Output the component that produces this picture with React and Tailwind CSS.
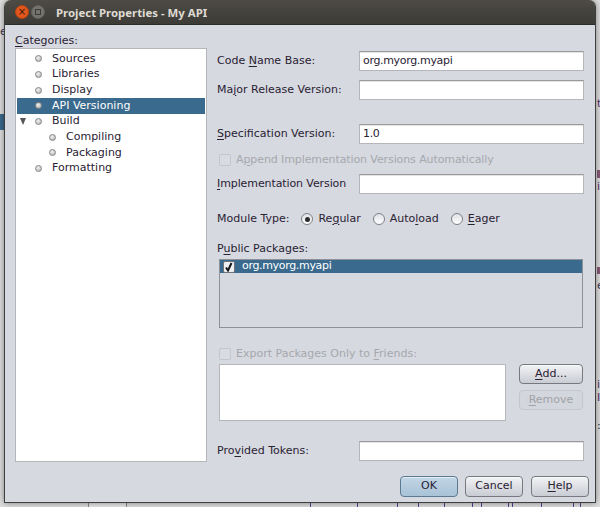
import React from "react";

const treeItems = [
  { label: "Sources" },
  { label: "Libraries" },
  { label: "Display" },
  { label: "API Versioning", selected: true },
  { label: "Build", expander: true },
  { label: "Compiling", child: true },
  { label: "Packaging", child: true },
  { label: "Formatting" },
];

const U = ({ children }) => <span className="underline underline-offset-2">{children}</span>;

const Bullet = () => (
  <span className="block w-[7px] h-[7px] rounded-full border border-[#85878a] bg-[radial-gradient(circle_at_40%_35%,#f4f4f4,#a8a8a8)]" />
);

const TreeRow = ({ label, selected, expander, child }) => (
  <div className={`flex items-center h-[15.7px] ${selected ? "bg-[#3a6a8e] text-white" : "text-[#2a2233]"}`}>
    <span className="w-[18px] flex">
      {expander && <span className="block ml-[3px] w-0 h-0 border-l-[3px] border-r-[3px] border-t-[7px] border-l-transparent border-r-transparent border-t-[#555]" />}
    </span>
    <span className={child ? "ml-[14px] w-[17px]" : "w-[17px]"}>
      <Bullet />
    </span>
    <span>{label}</span>
  </div>
);

const Field = ({ value }) => (
  <div className="w-[225px] h-[20px] bg-white border border-[#b4b6ba] border-t-[#9a9a9a] shadow-[inset_0_1px_0_#e4e4e4] pl-[3px] leading-[18px] tracking-[-0.33px] text-[#2a2233]">
    {value}
  </div>
);

const FormRow = ({ label, value, className }) => (
  <div className={`flex items-center h-[20px] ${className}`}>
    <span className="w-[142px] text-[#2a2233] shrink-0">{label}</span>
    <Field value={value} />
  </div>
);

const Radio = ({ checked }) => (
  <span className="flex items-center justify-center w-[12px] h-[12px] rounded-full border border-[#7e8085] bg-gradient-to-b from-[#dfe1e6] to-[#ffffff]">
    {checked && <span className="block w-[5px] h-[5px] rounded-full bg-[#2c2c2c]" />}
  </span>
);

const DisabledCheck = () => (
  <span className="block ml-[2px] w-[12px] h-[12px] rounded-[2px] border border-[#c4c6cb] bg-[#d8dbe1]" />
);

const Button = ({ children, className }) => (
  <div className={`flex items-center justify-center rounded-[4px] border text-[#2a2233] shadow-[inset_0_1px_0_rgba(255,255,255,0.6)] ${className}`}>{children}</div>
);

const WinButton = ({ children, className }) => (
  <span className={`flex items-center justify-center w-[14px] h-[14px] rounded-full ${className}`}>{children}</span>
);

const bottomTicks = [310, 357, 397, 418, 444, 472, 481, 508, 512, 541, 573, 580];

export default function App() {
  return (
    <div className="relative w-[600px] h-[507px] overflow-hidden bg-[#dedede] font-['DejaVu_Sans',sans-serif] text-[11px]">
      {/* bits of the window behind the dialog */}
      <span className="absolute left-0 top-[24px] text-[#3b3350]">e</span>
      <div className="absolute left-0 top-[114px] w-[5px] h-[16px] bg-[#3a6a8e]" />
      <span className="absolute left-[597px] top-[96px] text-[#5a2f6e]">t</span>
      <div className="absolute left-[597px] top-[170px] w-[3px] h-[8px] bg-[#8a5a78]" />
      <span className="absolute left-[597px] top-[179px] text-[#5a2f6e]">i</span>
      <div className="absolute left-[597px] top-[267px] w-[3px] h-[7px] bg-[#8a5a78]" />
      <span className="absolute left-[597px] top-[278px] text-[#3b3350]">e</span>
      <span className="absolute left-[597px] top-[377px] text-[#5a2f6e]">i</span>
      <span className="absolute left-[597px] top-[390px] text-[#5a2f6e]">I</span>
      <span className="absolute left-[597px] top-[418px] text-[#222]">:</span>
      <div className="absolute left-[88px] top-[502px] w-[39px] h-[5px] bg-[#e8e8e8] border-x border-[#888]" />
      {bottomTicks.map((x) => (
        <div key={x} className="absolute top-[503px] w-[1px] h-[4px] bg-[#5a3f8e]" style={{ left: x }} />
      ))}

      {/* dialog */}
      <div className="relative ml-[4px] w-[592px] h-[503px] flex flex-col bg-[#d6d9e0] border-x border-b border-[#3f3f3f] rounded-t-[7px] shadow-[0_0_6px_rgba(0,0,0,0.45)]">
        <div className="flex items-center h-[25px] shrink-0 rounded-t-[6px] bg-gradient-to-b from-[#4e4b45] to-[#3c3b37] border-b border-[#2c2c2c] pl-[10px]">
          <WinButton className="bg-[#e2571e] border border-[#b5430f]">
            <span className="text-[#3a1a08] text-[10px] leading-none">×</span>
          </WinButton>
          <WinButton className="ml-[2px] bg-[#75736e] border border-[#62605b]">
            <span className="block w-[6px] h-[6px] border border-[#3c3b37]" />
          </WinButton>
          <span className="ml-[11px] mt-[1px] font-bold text-[11.4px] text-[#dfdbd2] font-['Noto_Sans',sans-serif]">Project Properties - My API</span>
        </div>

        <div className="flex flex-1 pl-[10px] pt-[6px]">
          <div className="w-[192px] shrink-0 flex flex-col">
            <div className="h-[17px] leading-[17px] pt-[1px] text-[#2a2233]"><U>C</U>ategories:</div>
            <div className="w-[192px] h-[414px] bg-white border border-[#b4b6ba] pt-[2px] pl-[1px] pr-[1px]">
              {treeItems.map((item) => (
                <TreeRow key={item.label} {...item} />
              ))}
            </div>
          </div>

          <div className="ml-[10px] flex-1 pt-[20px]">
            <FormRow label={<>Code <U>N</U>ame Base:</>} value="org.myorg.myapi" />
            <FormRow className="mt-[9px]" label={<>Ma<U>j</U>or Release Version:</>} />
            <FormRow className="mt-[24px]" label={<><U>S</U>pecification Version:</>} value="1.0" />
            <div className="flex items-center h-[16px] mt-[8px] text-[#a6a8ad]">
              <DisabledCheck />
              <span className="ml-[5px] tracking-[-0.1px]">A<U>p</U>pend Implementation Versions Automatically</span>
            </div>
            <FormRow className="mt-[6px]" label={<span className="tracking-[-0.1px]"><U>I</U>mplementation Version</span>} />
            <div className="flex items-center h-[16px] mt-[17px] text-[#2a2233]">
              <span>Module Type:</span>
              <span className="ml-[12px]"><Radio checked /></span>
              <span className="ml-[5px]">Re<U>g</U>ular</span>
              <span className="ml-[12px]"><Radio /></span>
              <span className="ml-[5px]">Auto<U>l</U>oad</span>
              <span className="ml-[12px]"><Radio /></span>
              <span className="ml-[5px]"><U>E</U>ager</span>
            </div>
            <div className="h-[16px] mt-[14px] leading-[16px] text-[#2a2233]">P<U>u</U>blic Packages:</div>
            <div className="ml-[2px] mt-[2px] w-[364px] h-[69px] bg-[#d6d9e0] border border-[#8e9196]">
              <div className="flex items-center h-[13px] bg-[#3a6a8e] text-white">
                <span className="ml-[3px] flex items-center justify-center w-[12px] h-[12px] bg-[#eef0f3] border border-[#6f7277] rounded-[2px]">
                  <svg width="10" height="10" viewBox="0 0 10 10" fill="none">
                    <path d="M2 5.5L4 8.5L7.5 1" stroke="#161616" strokeWidth="2" />
                  </svg>
                </span>
                <span className="ml-[7px] tracking-[-0.33px]">org.myorg.myapi</span>
              </div>
            </div>
            <div className="flex items-center h-[16px] mt-[18px] text-[#a6a8ad]">
              <DisabledCheck />
              <span className="ml-[5px]">Export Packages Only to <U>F</U>riends:</span>
            </div>
            <div className="flex mt-[2px] ml-[2px]">
              <div className="w-[287px] h-[57px] bg-white border border-[#b4b6ba]" />
              <div className="ml-[13px] flex flex-col gap-[6px]">
                <Button className="w-[64px] h-[20px] border-[#77797e] bg-gradient-to-b from-[#f2f3f5] to-[#c9ccd3]"><span><U>A</U>dd...</span></Button>
                <Button className="w-[64px] h-[20px] border-[#c4c6cb] bg-[#d3d6dc] shadow-none"><span className="text-[#a0a2a7]"><U>R</U>emove</span></Button>
              </div>
            </div>
            <FormRow className="mt-[20px]" label={<>Pro<U>v</U>ided Tokens:</>} />
            <div className="flex mt-[15px] ml-[183px]">
              <Button className="w-[58px] h-[21px] border-[#5b7a92] bg-gradient-to-b from-[#c2d6e6] to-[#a9c2d6]">OK</Button>
              <Button className="ml-[7px] w-[58px] h-[21px] border-[#77797e] bg-gradient-to-b from-[#f2f3f5] to-[#c9ccd3]">Cancel</Button>
              <Button className="ml-[8px] w-[58px] h-[21px] border-[#77797e] bg-gradient-to-b from-[#f2f3f5] to-[#c9ccd3]"><span><U>H</U>elp</span></Button>
            </div>
          </div>
        </div>
      </div>
    </div>
  );
}
